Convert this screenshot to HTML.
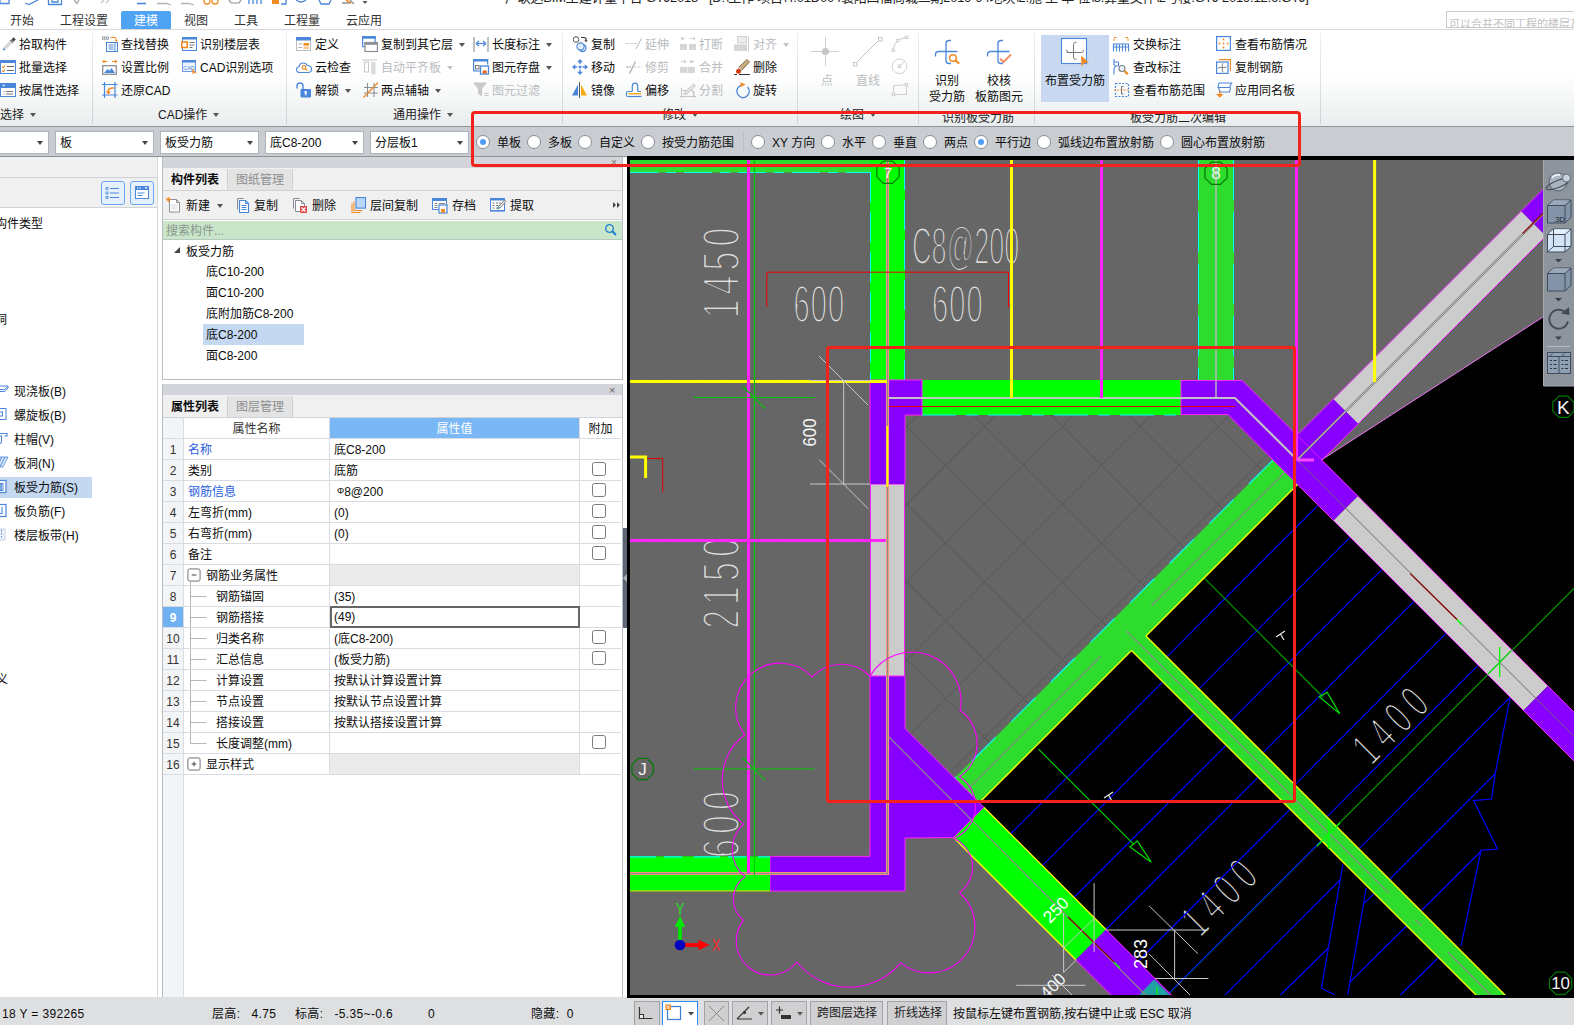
<!DOCTYPE html>
<html lang="zh">
<head>
<meta charset="utf-8">
<title>GTJ2018</title>
<style>
*{box-sizing:border-box;margin:0;padding:0}
html,body{width:1574px;height:1025px;overflow:hidden;background:#fff}
body{font-family:"Liberation Sans","Noto Sans CJK SC",sans-serif;font-size:12px;color:#0c0c0c;position:relative}
.abs{position:absolute}
.t{position:absolute;white-space:nowrap;line-height:16px;height:16px}
svg{position:absolute;overflow:visible}
#title{left:505px;top:-10px;font-size:13px;color:#222;letter-spacing:-0.21px}
.tab{position:absolute;top:12px;height:19px;line-height:18px;font-size:12px;color:#333;white-space:nowrap}
#tabsel{left:121px;top:11px;width:50px;height:19px;background:#4ea3f3;border-radius:2px 2px 0 0}
#ribbon{left:0;top:29px;width:1574px;height:97px;background:linear-gradient(#ffffff 0%,#ffffff 45%,#f4f6f6 75%,#e9eced 100%);border-top:1px solid #d9d9d9}
.sep{position:absolute;top:32px;width:1px;height:92px;background:linear-gradient(#f0f0f0,#cfd1d4)}
.ri{position:absolute;white-space:nowrap;font-size:12px;line-height:16px;height:16px;color:#0c0c0c}
.ri.dis{color:#b9bcc0}
.gl{position:absolute;white-space:nowrap;font-size:12px;line-height:16px;color:#222;top:107px}
.arr{display:inline-block;width:0;height:0;border-left:3px solid transparent;border-right:3px solid transparent;border-top:4px solid #555;vertical-align:middle;margin-left:6px;position:relative;top:-1px}
.dis .arr{border-top-color:#c0c3c7}
#optbar{left:0;top:126px;width:1574px;height:31px;background:#c9ccd1;border-top:1px solid #8f9398;border-bottom:1px solid #8f9398}
.dd{position:absolute;top:131px;height:23px;background:#fff;border:1px solid #aeb4bc;font-size:12px;line-height:22px;padding-left:4px;white-space:nowrap}
.dd:after{content:"";position:absolute;right:5px;top:9px;border-left:3px solid transparent;border-right:3px solid transparent;border-top:4px solid #444}
.rd{position:absolute;top:135px;width:14px;height:14px;border-radius:50%;background:#fff;border:1px solid #8a8f96}
.rd.on:after{content:"";position:absolute;left:3px;top:3px;width:6px;height:6px;border-radius:50%;background:#4f9af7}
.rt{position:absolute;top:135px;font-size:12px;line-height:16px;white-space:nowrap;color:#0c0c0c}


.sb{position:absolute;top:1001px;height:26px;background:#d0d0d2;border:1px solid #a3a3a5;font-size:12px;line-height:23px;white-space:nowrap;color:#1a1a1a}
.st{letter-spacing:0.35px}



/*PANELCSS*/
.lp{position:absolute;white-space:nowrap;font-size:12px;line-height:16px;height:16px;left:14px;color:#0c0c0c}
.pt{position:absolute;white-space:nowrap;font-size:12px;line-height:16px;height:16px;color:#0c0c0c}
.row{position:absolute;left:163px;width:458px;height:21px;border-bottom:1px solid #d9dde3}
.cell{position:absolute;top:0;height:20px;line-height:22px;font-size:12px;white-space:nowrap;border-right:1px solid #d9dde3;overflow:hidden}
.num{left:0;width:21px;text-align:center;background:#f3f4f6;color:#333}
.pn{left:21px;width:146px;padding-left:4px}
.pv{left:167px;width:250px;padding-left:4px;background:#fff}
.pa{left:417px;width:41px;border-right:none}
.cb{position:absolute;left:12px;top:2px;width:14px;height:14px;border:1px solid #7b7b7b;border-radius:2.500px;background:#fff}
.blue{color:#2b5fe0}
/*ENDPANELCSS*/
/*EXTRA_CSS*/
</style>
</head>
<body>
<div class="t" id="title">广联达BIM土建计量平台 GTJ2018 - [D:\工作 项目\4.01D004襄阳四福尚城二期2019-94地块\2.施 工 单 位\5.算量文件\2号楼.GTJ 2019.12.6.GTJ]</div>
<svg style="left:0;top:0" width="380" height="8" viewBox="0 0 380 8">
<path d="M0 0v3.500h9V0" fill="none" stroke="#4a86d9" stroke-width="1.300"/>
<path d="M25 3l4 1.500L38 0" fill="none" stroke="#4a86d9" stroke-width="1.300"/>
<path d="M48.500 0v4.500h13V0M52 0v2h6V0" fill="none" stroke="#4a86d9" stroke-width="1.300"/>
<path d="M74 0l3 3.500l2-3.500" fill="none" stroke="#9aa0a8" stroke-width="1.200"/>
<path d="M101 3l3-3M106 3l3-3" fill="none" stroke="#c0c4c9" stroke-width="1.200"/>
<path d="M137 3.500h9" stroke="#4a86d9" stroke-width="1.600"/>
<path d="M157 3.500h10l4 1.500M181 3.500h8l5 1.500" stroke="#b0b5bb" stroke-width="1.300" fill="none"/>
<circle cx="207" cy="1" r="3" fill="none" stroke="#f08a24" stroke-width="1.300"/><circle cx="215" cy="1" r="3" fill="none" stroke="#f08a24" stroke-width="1.300"/>
<path d="M229 0l2 3h8l2-3" fill="none" stroke="#8a9097" stroke-width="1.200"/>
<path d="M249 0v4M253 0v4M257 0v4M261 0v4" stroke="#4a86d9" stroke-width="1.300"/>
<rect x="272" y="-3" width="7" height="7" fill="#f08a24"/><path d="M281 4h5V0" stroke="#4a86d9" stroke-width="1.300" fill="none"/>
<path d="M296 0q5 4 10 0" stroke="#4a86d9" stroke-width="1.300" fill="none"/>
<path d="M319 0l2 4h8l2-4" stroke="#4a86d9" stroke-width="1.300" fill="none"/>
<path d="M342 3h8M350 0l4 4" stroke="#8a9097" stroke-width="1.300" fill="none"/><path d="M346 0l5 3" stroke="#f08a24" stroke-width="1.500"/>
<path d="M362.500 1h5l-2.500 3z" fill="#555"/>
</svg>
<div class="abs" id="tabsel"></div>
<div class="tab" style="left:10px">开始</div>
<div class="tab" style="left:60px">工程设置</div>
<div class="tab" style="left:134px;color:#fff">建模</div>
<div class="tab" style="left:184px">视图</div>
<div class="tab" style="left:234px">工具</div>
<div class="tab" style="left:284px">工程量</div>
<div class="tab" style="left:346px">云应用</div>
<div class="abs" style="left:1446px;top:11px;width:140px;height:17px;border:1px solid #c9c9c9;background:#fff;overflow:hidden"><div class="t" style="left:2px;top:4px;font-size:11px;color:#c2c2c2">可以合并不同工程的楼层及</div></div>
<div class="abs" id="ribbon"></div>
<div class="sep" style="left:92px"></div>
<div class="sep" style="left:286px"></div>
<div class="sep" style="left:562px"></div>
<div class="sep" style="left:797px"></div>
<div class="sep" style="left:918px"></div>
<div class="sep" style="left:1034px"></div>
<div class="sep" style="left:1320px"></div>
<svg style="left:1px;top:36px" width="16" height="16" viewBox="0 0 16 16"><path d="M12.6 1.2l2.2 2.2-2.3 2.3-2.2-2.2z" fill="#444"/><path d="M9.3 4.2l2.6 2.6" stroke="#555" stroke-width="1.6"/><path d="M9.6 5l1.5 1.5L4.3 13.3 2.2 14l.6-2.2z" fill="#e9e9e9" stroke="#999" stroke-width=".7"/><path d="M2 14.2l.7-2.3 1.6 1.5z" fill="#4a86d9"/></svg>
<div class="ri" style="left:19px;top:37px">拾取构件</div>
<svg style="left:0px;top:60px" width="16" height="16" viewBox="0 0 16 16"><rect x=".5" y=".5" width="15" height="13" fill="#fff" stroke="#4a86d9"/><rect x="0" y="0" width="16" height="3" fill="#4a86d9"/><path d="M2 6.5l1.2 1.2L5.2 5.5M2 10.500l1.200 1.200L5.200 9.500" fill="none" stroke="#f08a24" stroke-width="1.1"/><path d="M7 6.5h7M7 10.500h7" stroke="#666" stroke-width="1"/></svg>
<div class="ri" style="left:19px;top:60px">批量选择</div>
<svg style="left:0px;top:83px" width="16" height="16" viewBox="0 0 16 16"><rect x=".5" y=".5" width="15" height="13" fill="#fff" stroke="#4a86d9"/><rect x="0" y="0" width="16" height="5" fill="#4a86d9"/><path d="M2.200 1.800h3l-1.500 1.800z" fill="#fff"/><path d="M6 8.500h7M6 11h7" stroke="#777" stroke-width="1"/><path d="M3.500 8.500h1M3.500 11h1" stroke="#777" stroke-width="1"/></svg>
<div class="ri" style="left:19px;top:83px">按属性选择</div>
<svg style="left:102px;top:36px" width="16" height="16" viewBox="0 0 16 16"><rect x="0.500" y="1" width="6" height="2.200" fill="#fff" stroke="#8a9097" stroke-width=".8"/><path d="M2.500 1v2.200M4.500 1v2.200" stroke="#8a9097" stroke-width=".7"/><path d="M8.500 1.500h3.500q2 0 2 2v1" fill="none" stroke="#f08a24" stroke-width="1.100"/><path d="M12.700 4l1.800 2 1.500-2z" fill="#f08a24"/><rect x="4.500" y="6.500" width="11" height="9" fill="#fff" stroke="#4a86d9"/><path d="M6.500 9h5M6.500 11h5M6.500 13h5" stroke="#4a86d9" stroke-width="1"/><path d="M13 7v8" stroke="#4a86d9" stroke-width="1"/></svg>
<div class="ri" style="left:121px;top:37px">查找替换</div>
<svg style="left:102px;top:59px" width="16" height="16" viewBox="0 0 16 16"><path d="M1 2.500h4.500M10 2.500h4.500" stroke="#f08a24" stroke-width="1.100"/><path d="M0 2.500l2.500-2v4zM15.500 2.500l-2.500-2v4z" fill="#f08a24"/><rect x=".7" y="6.700" width="13.600" height="8.600" fill="#fff" stroke="#8a9097" stroke-width="1.300"/><path d="M2 14l3.500-4 2 1.800 2-2.800 3.500 5z" fill="#4a86d9"/></svg>
<div class="ri" style="left:121px;top:60px">设置比例</div>
<svg style="left:102px;top:82px" width="16" height="16" viewBox="0 0 16 16"><path d="M2.500 0v16M13 0v16M0 2.500h15.500M0 13h15.500" stroke="#4a86d9" stroke-width="1.200"/><path d="M6 10q0-4.500 6-4" fill="none" stroke="#f08a24" stroke-width="1.600"/><path d="M3.800 9.500h5l-2.500 3.200z" fill="#f08a24"/></svg>
<div class="ri" style="left:121px;top:83px">还原CAD</div>
<svg style="left:181px;top:37px" width="16" height="16" viewBox="0 0 16 16"><rect x="1.500" y=".5" width="14" height="13" fill="#fff" stroke="#4a86d9"/><rect x="1" y="0" width="15" height="2.500" fill="#4a86d9"/><rect x="0.800" y="5" width="5.500" height="5.500" fill="#fff" stroke="#f08a24" stroke-width="1.600"/><path d="M8.500 5.500h5M8.500 8h5M8.500 10.500h3" stroke="#777" stroke-width="1"/></svg>
<div class="ri" style="left:200px;top:37px">识别楼层表</div>
<svg style="left:182px;top:60px" width="16" height="16" viewBox="0 0 16 16"><rect x=".5" y=".5" width="13" height="11" fill="#eef3fb" stroke="#4a86d9" stroke-width=".8"/><rect x="0" y="0" width="14" height="2.500" fill="#4a86d9"/><text x="1.200" y="9.500" font-size="5.500" fill="#4a86d9" font-family="Liberation Sans,sans-serif">CAD</text><path d="M10.500 8.500v6l1.700-1.700 2.800 1z" fill="#f08a24"/></svg>
<div class="ri" style="left:200px;top:60px">CAD识别选项</div>
<svg style="left:296px;top:37px" width="16" height="16" viewBox="0 0 16 16"><rect x=".5" y=".5" width="14" height="13" fill="#fff" stroke="#b9bdc2"/><rect x="0" y="0" width="15" height="3.500" fill="#4a86d9"/><rect x="7.500" y="6" width="5.500" height="2.500" fill="#f08a24"/><rect x="7.500" y="9.500" width="5.500" height="2.500" fill="#f7c58b"/><path d="M2.500 7h3.500M2.500 10.500h3.500" stroke="#aaa" stroke-width="1"/></svg>
<div class="ri" style="left:315px;top:37px">定义</div>
<svg style="left:296px;top:59px" width="16" height="16" viewBox="0 0 16 16"><path d="M4 13.500q-3.500 0-3.500-3 0-2.500 2.800-3 .3-3.500 4-3.500 3 0 3.800 2.500 4.400 0 4.400 3.500 0 3.500-3.500 3.500z" fill="#fff" stroke="#4a86d9" stroke-width="1.100"/><circle cx="8" cy="8.500" r="1.900" fill="none" stroke="#f08a24" stroke-width="1.100"/><path d="M9.400 9.900l1.600 1.600" stroke="#f08a24" stroke-width="1.200"/></svg>
<div class="ri" style="left:315px;top:60px">云检查</div>
<svg style="left:296px;top:82px" width="16" height="16" viewBox="0 0 16 16"><path d="M1 6.500v-2.500q0-3 3-3t3 3v3" fill="none" stroke="#4a86d9" stroke-width="1.400"/><rect x="4.500" y="7" width="10.500" height="8.500" rx="1" fill="#4a86d9"/><circle cx="9.700" cy="10.300" r="1.300" fill="#fff"/><rect x="9.100" y="10.500" width="1.200" height="3" fill="#fff"/></svg>
<div class="ri" style="left:315px;top:83px">解锁<i class="arr"></i></div>
<svg style="left:362px;top:36px" width="16" height="16" viewBox="0 0 16 16"><rect x=".6" y=".6" width="12.500" height="10" fill="#fff" stroke="#4a86d9" stroke-width="1.200"/><rect x="0" y="0" width="13.700" height="2.700" fill="#4a86d9"/><rect x="3" y="6.500" width="12.400" height="9" fill="#fff" stroke="#8a9097" stroke-width="1.200"/><rect x="2.400" y="6" width="13.600" height="2.800" fill="#8a9097"/></svg>
<div class="ri" style="left:381px;top:37px">复制到其它层<i class="arr"></i></div>
<svg style="left:362px;top:59px" width="16" height="16" viewBox="0 0 16 16"><path d="M0 1h15" stroke="#c4c7cb" stroke-width="1"/><rect x="2.500" y="3" width="4" height="10" fill="#fff" stroke="#c4c7cb"/><rect x="9" y="3" width="4.500" height="12.500" fill="#dcdcdc"/></svg>
<div class="ri dis" style="left:381px;top:60px">自动平齐板<i class="arr"></i></div>
<svg style="left:363px;top:82px" width="16" height="16" viewBox="0 0 16 16"><path d="M4.500 1v14M11 1v14M1 5.500h14M1 11h14" stroke="#8a9097" stroke-width="1.100"/><path d="M0.500 15.500L15 0.500" stroke="#f08a24" stroke-width="1.200"/></svg>
<div class="ri" style="left:381px;top:83px">两点辅轴<i class="arr"></i></div>
<svg style="left:473px;top:37px" width="16" height="16" viewBox="0 0 16 16"><path d="M1 0v15M15 0v15" stroke="#8a9097" stroke-width="1.100"/><path d="M4 6.500h8" stroke="#4a86d9" stroke-width="1.200"/><path d="M3 6.500l3-2.500M3 6.500l3 2.500M13 6.500l-3-2.500M13 6.500l-3 2.500" stroke="#4a86d9" stroke-width="1.200" fill="none"/></svg>
<div class="ri" style="left:492px;top:37px">长度标注<i class="arr"></i></div>
<svg style="left:473px;top:59px" width="16" height="16" viewBox="0 0 16 16"><path d="M.6 12V.6h14v5" fill="none" stroke="#4a86d9" stroke-width="1.200"/><rect x="0" y="0" width="15.200" height="2.500" fill="#4a86d9"/><rect x="2.500" y="6.500" width="3.500" height="3.500" fill="none" stroke="#777" stroke-width="1"/><path d="M.6 12h6" stroke="#4a86d9" stroke-width="1.200"/><rect x="7.500" y="7" width="8" height="8" fill="#fff" stroke="#4a86d9" stroke-width="1.300"/><rect x="9.700" y="11.500" width="4" height="3" fill="#e8641b"/></svg>
<div class="ri" style="left:492px;top:60px">图元存盘<i class="arr"></i></div>
<svg style="left:473px;top:82px" width="16" height="16" viewBox="0 0 16 16"><path d="M0 .5h14l-5 6.500v7.500l-4-3v-4.500z" fill="#c9c9c9"/><path d="M11.500 11.500h4M11.500 13.500h4" stroke="#c9c9c9" stroke-width="1"/></svg>
<div class="ri dis" style="left:492px;top:83px">图元过滤</div>
<svg style="left:572px;top:36px" width="16" height="16" viewBox="0 0 16 16"><circle cx="4" cy="3.500" r="2.800" fill="#fff" stroke="#555" stroke-width="1"/><path d="M9 1.500h3q2 0 2 1.800v1.500" fill="none" stroke="#333" stroke-width="1.200"/><path d="M12.300 4.300l1.700 2 1.700-2z" fill="#333"/><circle cx="10.500" cy="12" r="3.600" fill="#cfe0f7" stroke="#4a86d9" stroke-width="1.100"/><circle cx="8.500" cy="10.500" r="3.600" fill="#e3edfb" stroke="#4a86d9" stroke-width="1.100"/></svg>
<div class="ri" style="left:591px;top:37px">复制</div>
<svg style="left:572px;top:59px" width="16" height="16" viewBox="0 0 16 16"><path d="M8 2v12M2 8h12" stroke="#4a86d9" stroke-width="1.400" stroke-dasharray="3 1.500 3 1 3 1.500"/><path d="M8 0l2.800 3.200h-5.600zM8 16l2.800-3.200h-5.600zM0 8l3.200-2.800v5.600zM16 8l-3.200-2.800v5.600z" fill="#4a86d9"/></svg>
<div class="ri" style="left:591px;top:60px">移动</div>
<svg style="left:572px;top:82px" width="16" height="16" viewBox="0 0 16 16"><path d="M7.500 0v16" stroke="#555" stroke-width="1"/><path d="M6 2.500v11h-6z" fill="#4a86d9"/><path d="M9 2.500v11h6z" fill="#f9a913"/></svg>
<div class="ri" style="left:591px;top:83px">镜像</div>
<svg style="left:626px;top:37px" width="16" height="16" viewBox="0 0 16 16"><path d="M0 6.500h7" stroke="#c4c7cb" stroke-width="1" stroke-dasharray="3 1.500"/><path d="M10 12L15.500 1.500" stroke="#c4c7cb" stroke-width="1.200"/><path d="M8 6.500h3" stroke="#c4c7cb" stroke-width="1"/></svg>
<div class="ri dis" style="left:645px;top:37px">延伸</div>
<svg style="left:626px;top:60px" width="16" height="16" viewBox="0 0 16 16"><path d="M0 7h5" stroke="#aaa" stroke-width="1"/><path d="M3.500 13.500L9.500 1.500" stroke="#aaa" stroke-width="1.200"/><path d="M8.500 7h7.500" stroke="#c4c7cb" stroke-width="1" stroke-dasharray="2 1.300"/></svg>
<div class="ri dis" style="left:645px;top:60px">修剪</div>
<svg style="left:626px;top:82px" width="16" height="16" viewBox="0 0 16 16"><path d="M1.800 14.500q-1.300 0-1.300-1.500v-2q0-1.500 1.500-1.500h3.500q.8 0 .8-.8v-4q0-3.500 2.700-3.500t2.700 3.500v4q0 .8.800.8h2.500" fill="#fff" stroke="#4a86d9" stroke-width="1.200"/><path d="M2 14.500h13.500" stroke="#4a86d9" stroke-width="1.200"/><path d="M2.500 11.700h13" stroke="#f9a913" stroke-width="1.400"/><path d="M8.200 4v6" stroke="#f9a913" stroke-width="0"/></svg>
<div class="ri" style="left:645px;top:83px">偏移</div>
<svg style="left:680px;top:36px" width="16" height="16" viewBox="0 0 16 16"><path d="M2.500 2.500h3M10 2.500h3" stroke="#c4c7cb" stroke-width="1" stroke-dasharray="2 1"/><path d="M.5 2.500l2.500-2v4zM15.500 2.500l-2.500-2v4z" fill="#c4c7cb"/><rect x="0" y="8" width="7" height="6" fill="#d6d6d6"/><rect x="9" y="8" width="7" height="6" fill="#d6d6d6"/></svg>
<div class="ri dis" style="left:699px;top:37px">打断</div>
<svg style="left:680px;top:59px" width="16" height="16" viewBox="0 0 16 16"><path d="M1 2.500h3M12 2.500h3" stroke="#c4c7cb" stroke-width="1" stroke-dasharray="2 1"/><path d="M6.500 2.500l-2.500-2v4zM9.500 2.500l2.500-2v4z" fill="#c4c7cb"/><rect x="0" y="8" width="7.300" height="6" fill="#d6d6d6"/><rect x="7.700" y="8" width="7.300" height="6" fill="#d6d6d6"/></svg>
<div class="ri dis" style="left:699px;top:60px">合并</div>
<svg style="left:680px;top:83px" width="16" height="16" viewBox="0 0 16 16"><path d="M1.500 7.500h11l1.500 6h-12.500z" fill="none" stroke="#c4c4c4" stroke-width="1"/><path d="M1.500 5v10M14 8v7M0 13.500h16" stroke="#c4c4c4" stroke-width="1"/><path d="M4 11.500l1-2.500L13.500 1l2 2-8.500 8z" fill="#e4e4e4" stroke="#bdbdbd" stroke-width=".8"/></svg>
<div class="ri dis" style="left:699px;top:83px">分割</div>
<svg style="left:734px;top:36px" width="16" height="16" viewBox="0 0 16 16"><rect x="3.500" y=".5" width="9" height="6.500" fill="#ececec" stroke="#d0d0d0"/><rect x="0" y="8.500" width="13" height="6.500" fill="#d6d6d6"/><path d="M14.500 0v16" stroke="#d0d0d0" stroke-width="1"/></svg>
<div class="ri dis" style="left:753px;top:37px">对齐<i class="arr"></i></div>
<svg style="left:734px;top:59px" width="16" height="16" viewBox="0 0 16 16"><path d="M0 15.500h3M5 15.500h11" stroke="#333" stroke-width="1"/><path d="M13 .5l2.500 2.500L8 11 5 8z" fill="#c9ab7c" stroke="#6f5532" stroke-width=".8"/><path d="M5.200 7.800l3 3-1 1.200-3-3z" fill="#eee" stroke="#888" stroke-width=".6"/><circle cx="4.500" cy="12.300" r="2.500" fill="#d3400f"/></svg>
<div class="ri" style="left:753px;top:60px">删除</div>
<svg style="left:735px;top:82px" width="16" height="16" viewBox="0 0 16 16"><path d="M6.500 3.300A6.200 6.200 0 1 0 12.500 5" fill="none" stroke="#4a86d9" stroke-width="1.300"/><path d="M5.500 .3l5 2.200-5 2.700z" fill="#f08a24"/></svg>
<div class="ri" style="left:753px;top:83px">旋转</div>
<div class="gl" style="left:0px">选择<i class="arr"></i></div>
<div class="gl" style="left:158px">CAD操作<i class="arr"></i></div>
<div class="gl" style="left:393px">通用操作<i class="arr"></i></div>
<div class="gl" style="left:662px">修改<i class="arr"></i></div>
<div class="gl" style="left:840px">绘图<i class="arr"></i></div>
<div class="gl" style="left:942px;top:110px">识别板受力筋</div>
<div class="gl" style="left:1130px;top:110px">板受力筋二次编辑</div>
<svg style="left:806px;top:34px" width="110" height="66" viewBox="806 34 110 66">
<path d="M811 51.500h28M825.500 37v29" stroke="#cfcfcf" stroke-width="1"/><circle cx="825.500" cy="51.500" r="3.600" fill="#c6c6c6"/>
<path d="M856 63L879 40" stroke="#c6c6c6" stroke-width="1"/><rect x="853.500" y="62.500" width="3.500" height="3.500" fill="#fff" stroke="#c6c6c6"/><rect x="878.500" y="37.500" width="3.500" height="3.500" fill="#fff" stroke="#c6c6c6"/>
<path d="M893.500 49q.5-9 12-11.500" fill="none" stroke="#c9c9c9" stroke-width="1"/><rect x="892" y="49" width="2.600" height="2.600" fill="#fff" stroke="#c6c6c6" stroke-width=".8"/><rect x="896.300" y="39.300" width="2.600" height="2.600" fill="#fff" stroke="#c6c6c6" stroke-width=".8"/><rect x="905.300" y="36" width="2.600" height="2.600" fill="#fff" stroke="#c6c6c6" stroke-width=".8"/>
<circle cx="899.500" cy="66.300" r="7.300" fill="none" stroke="#d0d0d0" stroke-width="1"/><path d="M899.500 66.300l5-5" stroke="#d0d0d0"/><rect x="898.200" y="65" width="2.600" height="2.600" fill="#fff" stroke="#c6c6c6" stroke-width=".8"/>
<path d="M893.500 94.500v-9l13-.8v9.800z" fill="none" stroke="#cfcfcf" stroke-width="1"/><rect x="892.200" y="93.200" width="2.600" height="2.600" fill="#fff" stroke="#c6c6c6" stroke-width=".8"/><rect x="905.200" y="83.400" width="2.600" height="2.600" fill="#fff" stroke="#c6c6c6" stroke-width=".8"/>
</svg>
<div class="ri dis" style="left:821px;top:73px">点</div>
<div class="ri dis" style="left:856px;top:73px">直线</div>
<svg style="left:930px;top:36px" width="100" height="32" viewBox="930 36 100 32">
<path d="M951 40.500h-2q-3 0-3 3v17q0 3 3 3h2M957.500 51.500h-19q-3 0-3 3v2" fill="none" stroke="#4a86d9" stroke-width="1.300"/>
<circle cx="953" cy="58" r="3.300" fill="#fff" stroke="#f08a24" stroke-width="1.500"/><path d="M955.500 60.500l3 2.500" stroke="#f08a24" stroke-width="2.200" stroke-linecap="round"/>
<path d="M1003 40.500h-2q-3 0-3 3v17q0 3 3 3h2M1009.500 51.500h-19q-3 0-3 3v2" fill="none" stroke="#4a86d9" stroke-width="1.300"/>
<path d="M1000 58.500l3.500 3.500 7.500-7.500" fill="none" stroke="#f4906a" stroke-width="2"/>
</svg>
<div class="ri" style="left:907px;width:80px;text-align:center;top:73px">识别</div>
<div class="ri" style="left:907px;width:80px;text-align:center;top:89px">受力筋</div>
<div class="ri" style="left:959px;width:80px;text-align:center;top:73px">校核</div>
<div class="ri" style="left:959px;width:80px;text-align:center;top:89px">板筋图元</div>
<div class="abs" style="left:1041px;top:35px;width:68px;height:67px;background:#c7d8f0"></div>
<svg style="left:1060px;top:37px" width="30" height="30" viewBox="1060 37 30 30">
<rect x="1061.500" y="38.500" width="25" height="25" fill="#fff" stroke="#4a86d9" stroke-width="1.100"/>
<path d="M1073.500 44.500v12.500q0 2.300 2.300 2.300h.7M1073.500 44.500q0-2.300 2.300-2.300h.7M1066.700 52.500h14.500q2.300 0 2.300-2v-.7M1073.500 52.500h-4.500q-2.300 0-2.300-2.300v-.7" fill="none" stroke="#777" stroke-width="1"/>
<path d="M1081 55.500l8 7-4.500.6-3 3.400z" fill="#f08a24"/>
</svg>
<div class="ri" style="left:1045px;width:60px;text-align:center;top:73px">布置受力筋</div>
<svg style="left:1113px;top:36px" width="16" height="16" viewBox="0 0 16 16"><path d="M1 5v-3.500h3M15 5v-3.500h-3" fill="none" stroke="#f08a24" stroke-width="1.100" stroke-dasharray="2.500 1"/><path d="M.5 15.500v-7.500h15v7.500" fill="none" stroke="#4a86d9" stroke-width="1.100"/><path d="M3.500 8v7.500M6.500 8v7.500M9.500 8v7.500M12.500 8v7.500M.5 11h15" stroke="#4a86d9" stroke-width="1"/></svg>
<div class="ri" style="left:1133px;top:37px">交换标注</div>
<svg style="left:1113px;top:59px" width="16" height="16" viewBox="0 0 16 16"><path d="M1 0v5.500l1.500 2-1.500 2v6" fill="none" stroke="#4a86d9" stroke-width="1.100"/><path d="M1 3h4.500v4h-3" fill="none" stroke="#4a86d9" stroke-width="1"/><circle cx="9" cy="9.500" r="3" fill="#eef4fc" stroke="#7a8088" stroke-width="1.100"/><path d="M11.500 12l3.300 3.300" stroke="#f08a24" stroke-width="2.200"/></svg>
<div class="ri" style="left:1133px;top:60px">查改标注</div>
<svg style="left:1114px;top:82px" width="16" height="16" viewBox="0 0 16 16"><rect x="1.500" y="1.500" width="13" height="13" fill="none" stroke="#4a86d9" stroke-width="1.100" stroke-dasharray="2 1.400"/><path d="M0 8h16" stroke="#f08a24" stroke-width="1" stroke-dasharray="2 1.200"/><path d="M9.500 4.500h-2v7.500h2" fill="none" stroke="#777" stroke-width="1"/></svg>
<div class="ri" style="left:1133px;top:83px">查看布筋范围</div>
<svg style="left:1216px;top:36px" width="16" height="16" viewBox="0 0 16 16"><rect x=".6" y=".6" width="13.800" height="13.800" fill="#fff" stroke="#4a86d9" stroke-width="1.200"/><path d="M7.500 2l1.300 2.200h-2.600zM7.500 13l1.300-2.200h-2.600zM2 7.500l2.200-1.300v2.600zM13 7.500l-2.200-1.300v2.600z" fill="#f08a24"/><circle cx="7.500" cy="7.500" r=".9" fill="#f08a24"/></svg>
<div class="ri" style="left:1235px;top:37px">查看布筋情况</div>
<svg style="left:1216px;top:59px" width="16" height="16" viewBox="0 0 16 16"><path d="M3 .6h11.400v11.400" fill="none" stroke="#f08a24" stroke-width="1.100"/><rect x=".6" y="3" width="11.400" height="11.400" fill="#fff" stroke="#4a86d9" stroke-width="1.200"/><path d="M6.300 5.500v6.500M3 8.500h6.500M6.300 5.500q0-1 1-1M3 8.500q-.8 0-.8 1M9.500 8.500q.8 0 .8-1M6.300 12q0 .8 1 .8" fill="none" stroke="#777" stroke-width=".9"/></svg>
<div class="ri" style="left:1235px;top:60px">复制钢筋</div>
<svg style="left:1216px;top:82px" width="16" height="16" viewBox="0 0 16 16"><path d="M3 1h12.500l-2 4.500h-11.500zM2.500 5.500l1.500 4.500h9.500l1-4.500" fill="#fff" stroke="#4a86d9" stroke-width="1.100"/><path d="M0 12h7.500l-3.700 3.700z" fill="#f08a24"/><path d="M3.800 9v3" stroke="#f08a24" stroke-width="1.300"/></svg>
<div class="ri" style="left:1235px;top:83px">应用同名板</div>
<div class="abs" id="optbar"></div>
<div class="dd" style="left:-40px;width:89px"></div>
<div class="dd" style="left:55px;width:99px">板</div>
<div class="dd" style="left:160px;width:99px">板受力筋</div>
<div class="dd" style="left:265px;width:99px">底C8-200</div>
<div class="dd" style="left:370px;width:99px">分层板1</div>
<div class="rd on" style="left:476px"></div><div class="rt" style="left:497px">单板</div>
<div class="rd" style="left:527px"></div><div class="rt" style="left:548px">多板</div>
<div class="rd" style="left:578px"></div><div class="rt" style="left:599px">自定义</div>
<div class="rd" style="left:641px"></div><div class="rt" style="left:662px">按受力筋范围</div>
<div class="rd" style="left:751px"></div><div class="rt" style="left:772px">XY 方向</div>
<div class="rd" style="left:821px"></div><div class="rt" style="left:842px">水平</div>
<div class="rd" style="left:872px"></div><div class="rt" style="left:893px">垂直</div>
<div class="rd" style="left:923px"></div><div class="rt" style="left:944px">两点</div>
<div class="rd on" style="left:974px"></div><div class="rt" style="left:995px">平行边</div>
<div class="rd" style="left:1037px"></div><div class="rt" style="left:1058px">弧线边布置放射筋</div>
<div class="rd" style="left:1160px"></div><div class="rt" style="left:1181px">圆心布置放射筋</div>
<div class="abs" style="left:743px;top:132px;width:1px;height:20px;background:#bcc0c6"></div>
<div class="abs" style="left:0;top:157px;width:157px;height:840px;background:#fff"></div>
<div class="abs" style="left:0;top:157px;width:157px;height:51px;background:#f0f0f0;border-bottom:1px solid #cfd3d8"></div>
<div class="abs" style="left:0;top:177px;width:157px;height:1px;background:#cfd3d8"></div>
<div class="abs" style="left:157px;top:157px;width:1px;height:840px;background:#d6d9dd"></div>
<div class="abs" style="left:101px;top:181px;width:24px;height:24px;border:1px solid #69a7ee;border-radius:3px;background:#e6f0fc"></div>
<div class="abs" style="left:130px;top:181px;width:24px;height:24px;border:1px solid #69a7ee;border-radius:3px;background:#e6f0fc"></div>
<svg style="left:101px;top:181px" width="24" height="24" viewBox="0 0 24 24"><path d="M9 7.500h9M9 12h9M9 16.500h9" stroke="#4a86d9" stroke-width="1"/><rect x="5" y="6.500" width="2" height="2" fill="none" stroke="#4a86d9" stroke-width=".8"/><rect x="5" y="11" width="2" height="2" fill="none" stroke="#4a86d9" stroke-width=".8"/><rect x="5" y="15.500" width="2" height="2" fill="none" stroke="#4a86d9" stroke-width=".8"/></svg>
<svg style="left:130px;top:181px" width="24" height="24" viewBox="0 0 24 24"><rect x="5.500" y="5.500" width="13" height="12" fill="#fff" stroke="#4a86d9"/><rect x="5" y="5" width="14" height="4" fill="#4a86d9"/><path d="M7 7h4" stroke="#fff" stroke-width="1" stroke-dasharray="1 .6"/><path d="M14.500 6.300h3l-1.500 1.700z" fill="#fff"/><path d="M7.500 12h7M7.500 14.500h5" stroke="#4a86d9" stroke-width="1"/></svg>
<div class="lp" style="left:-5px;top:216px">构件类型</div>
<div class="lp" style="left:-5px;top:312px">洞</div>
<div class="lp" style="left:-4px;top:672px">义</div>
<div class="abs" style="left:0;top:477px;width:92px;height:21px;background:#c5d8f2"></div>
<svg style="left:0;top:383px" width="12" height="16" viewBox="0 0 12 16"><path d="M-4 6.500l3-3.500h9l-3 3.500zM-4 6.500v2h9l3-3.500v-2" fill="#fff" stroke="#4a86d9" stroke-width="1"/></svg>
<div class="lp" style="top:384px">现浇板(B)</div>
<svg style="left:0;top:407px" width="12" height="16" viewBox="0 0 12 16"><rect x="-5" y="1.500" width="11" height="11" fill="#fff" stroke="#4a86d9"/><rect x="-1.500" y="5" width="4" height="4" fill="none" stroke="#4a86d9"/></svg>
<div class="lp" style="top:408px">螺旋板(B)</div>
<svg style="left:0;top:431px" width="12" height="16" viewBox="0 0 12 16"><path d="M-3 2.500h10v2.500h-2.500M-3 5h4.500v5q0 3-3 3h-2" fill="none" stroke="#4a86d9" stroke-width="1.100"/></svg>
<div class="lp" style="top:432px">柱帽(V)</div>
<svg style="left:0;top:455px" width="12" height="16" viewBox="0 0 12 16"><path d="M-6 12l5-10h9l-5 10z" fill="#dfe9f8" stroke="#4a86d9" stroke-width=".8"/><path d="M-3 12l5-10M0 12l5-10M-5.500 12l5-10" stroke="#4a86d9" stroke-width="1"/></svg>
<div class="lp" style="top:456px">板洞(N)</div>
<svg style="left:0;top:479px" width="12" height="16" viewBox="0 0 12 16"><rect x="-6" y="1.500" width="12" height="12" fill="#fff" stroke="#4a86d9" stroke-width="1.200"/><rect x="-3" y="4.500" width="6" height="7" fill="none" stroke="#4a86d9"/><path d="M1 4.500v7" stroke="#4a86d9" stroke-width="1.500"/></svg>
<div class="lp" style="top:480px">板受力筋(S)</div>
<svg style="left:0;top:503px" width="12" height="16" viewBox="0 0 12 16"><rect x="-6" y="1.500" width="12" height="12" fill="#fff" stroke="#4a86d9" stroke-width="1.200"/><path d="M-2 5v5.500h4M2 4v7" fill="none" stroke="#4a86d9" stroke-width="1.100"/></svg>
<div class="lp" style="top:504px">板负筋(F)</div>
<svg style="left:0;top:527px" width="12" height="16" viewBox="0 0 12 16"><rect x="-4" y="2" width="9" height="11" fill="#eef3fb" stroke="#b9c6da" stroke-width=".8"/><path d="M1.500 3v9" stroke="#4a86d9" stroke-width="1" stroke-dasharray="1.500 1.500"/></svg>
<div class="lp" style="top:528px">楼层板带(H)</div>
<div class="abs" style="left:162px;top:157px;width:461px;height:223px;background:#fff;border:1px solid #b9bdc4"></div>
<div class="abs" style="left:163px;top:157px;width:459px;height:11px;background:#d3d5da"></div>
<div class="abs" style="left:163px;top:168px;width:459px;height:23px;background:#f0f0f0;border-bottom:1px solid #cfd3d8"></div>
<div class="abs" style="left:227px;top:169px;width:66px;height:21px;background:#e3e3e3;border-left:1px solid #d0d0d0;border-right:1px solid #d0d0d0"></div>
<div class="pt" style="left:171px;top:172px;font-weight:bold">构件列表</div>
<div class="pt" style="left:236px;top:172px;color:#8e8e8e">图纸管理</div>
<div class="pt" style="left:611px;top:155px;color:#777;font-size:10px">×</div>
<div class="abs" style="left:163px;top:191px;width:459px;height:29px;background:#f0f0f0;border-bottom:1px solid #cfd3d8"></div>
<svg style="left:166px;top:197px" width="16" height="16" viewBox="0 0 16 16"><path d="M3.500 2.500h7l3 3v9.500h-10z" fill="#fff" stroke="#8a8f96"/><path d="M10.500 2.500v3h3" fill="none" stroke="#8a8f96"/><path d="M5 8h6.500M5 10h6.500M5 12h6.500" stroke="#d0d0d0" stroke-width=".8"/><path d="M0 2.500h5M2.500 0v5M.7.700l3.600 3.600M4.300.7L.7 4.300" stroke="#f08a24" stroke-width=".9"/></svg>
<div class="pt" style="left:186px;top:198px">新建</div>
<svg style="left:235px;top:197px" width="16" height="16" viewBox="0 0 16 16"><path d="M2.500 12.500v-11h6" fill="none" stroke="#8a8f96"/><path d="M4.500 3.500h6l3 3v9h-9z" fill="#fff" stroke="#4a86d9" stroke-width="1.100"/><path d="M10.500 3.500v3h3" fill="none" stroke="#4a86d9"/><path d="M6.500 8.500h5M6.500 10.500h5M6.500 12.500h5" stroke="#4a86d9" stroke-width="1"/></svg>
<div class="pt" style="left:254px;top:198px">复制</div>
<svg style="left:292px;top:197px" width="16" height="16" viewBox="0 0 16 16"><path d="M1.500 11.500v-10h6" fill="none" stroke="#8a8f96"/><path d="M3.500 3.500h6l3 3v8h-9z" fill="#fff" stroke="#8a8f96"/><path d="M9.500 3.500v3h3" fill="none" stroke="#8a8f96"/><rect x="8" y="9" width="7" height="7" fill="#e34a4a"/><path d="M9.500 10.500l4 4M13.500 10.500l-4 4" stroke="#fff" stroke-width="1.100"/></svg>
<div class="pt" style="left:312px;top:198px">删除</div>
<svg style="left:351px;top:197px" width="16" height="16" viewBox="0 0 16 16"><path d="M1 6.500v9h8.500M3 4.500v9h8.500" fill="none" stroke="#f08a24" stroke-width="1.100"/><rect x="5" y=".6" width="9.500" height="10.500" fill="#bcd6f7" stroke="#4a86d9" stroke-width="1.100"/></svg>
<div class="pt" style="left:370px;top:198px">层间复制</div>
<svg style="left:432px;top:197px" width="16" height="16" viewBox="0 0 16 16"><rect x=".5" y="1.500" width="14" height="11" fill="#fff" stroke="#4a86d9"/><rect x="0" y="1" width="15" height="3" fill="#4a86d9"/><path d="M2.500 6.500h3M2.500 8.500h3M2.500 10.500h3M7 6.500h6" stroke="#888" stroke-width="1"/><rect x="7" y="8" width="8" height="8" fill="#fff" stroke="#4a86d9" stroke-width="1.200"/><rect x="9" y="12" width="4" height="3.500" fill="#f08a24"/></svg>
<div class="pt" style="left:452px;top:198px">存档</div>
<svg style="left:490px;top:197px" width="16" height="16" viewBox="0 0 16 16"><rect x=".5" y="1.500" width="14" height="12" fill="#fff" stroke="#4a86d9"/><rect x="0" y="1" width="15" height="2.500" fill="#4a86d9"/><path d="M2.500 6h2M2.500 8.500h2M2.500 11h2M6 6h5M6 8.500h4M6 11h2" stroke="#777" stroke-width="1" stroke-dasharray="2 .8"/><path d="M14.500 3l1.500 1.500-6 6.500-2.500 1 1-2.500z" fill="#ddd" stroke="#666" stroke-width=".7"/><path d="M7.500 12l1-2.500 1.500 1.500z" fill="#29a3e0"/><path d="M0 14h15" stroke="#4a86d9" stroke-width="1.200"/></svg>
<div class="pt" style="left:510px;top:198px">提取</div>
<div class="abs" style="left:217px;top:204px;width:0;height:0;border-left:3px solid transparent;border-right:3px solid transparent;border-top:4px solid #555"></div>
<div class="abs" style="left:613px;top:202px;width:0;height:0;border-top:3px solid transparent;border-bottom:3px solid transparent;border-left:3.500px solid #444"></div>
<div class="abs" style="left:617px;top:202px;width:0;height:0;border-top:3px solid transparent;border-bottom:3px solid transparent;border-left:3.500px solid #444"></div>
<div class="abs" style="left:163px;top:221px;width:459px;height:19px;background:#c9e6ca;border-bottom:1px solid #b8c8c0"></div>
<div class="pt" style="left:166px;top:223px;color:#8a968c">搜索构件...</div>
<svg style="left:604px;top:223px" width="14" height="14" viewBox="0 0 14 14"><circle cx="5.500" cy="5.500" r="3.800" fill="none" stroke="#1d7fd1" stroke-width="1.300"/><path d="M8.300 8.300l3.700 3.700" stroke="#1d7fd1" stroke-width="2"/></svg>
<div class="abs" style="left:174px;top:247px;width:0;height:0;border-left:6px solid transparent;border-bottom:6px solid #444"></div>
<div class="pt" style="left:186px;top:244px">板受力筋</div>
<div class="abs" style="left:203px;top:324px;width:101px;height:21px;background:#c5d8f2"></div>
<div class="pt" style="left:206px;top:264px">底C10-200</div>
<div class="pt" style="left:206px;top:285px">面C10-200</div>
<div class="pt" style="left:206px;top:306px">底附加筋C8-200</div>
<div class="pt" style="left:206px;top:327px">底C8-200</div>
<div class="pt" style="left:206px;top:348px">面C8-200</div>
<div class="abs" style="left:162px;top:384px;width:461px;height:614px;background:#fff;border:1px solid #b9bdc4"></div>
<div class="abs" style="left:163px;top:384px;width:459px;height:11px;background:#d3d5da"></div>
<div class="pt" style="left:609px;top:382px;color:#666;font-size:11px">×</div>
<div class="abs" style="left:163px;top:395px;width:459px;height:23px;background:#f0f0f0;border-bottom:1px solid #cfd3d8"></div>
<div class="abs" style="left:227px;top:396px;width:66px;height:21px;background:#e3e3e3;border-left:1px solid #d0d0d0;border-right:1px solid #d0d0d0"></div>
<div class="pt" style="left:171px;top:399px;font-weight:bold">属性列表</div>
<div class="pt" style="left:236px;top:399px;color:#8e8e8e">图层管理</div>
<div class="abs" style="left:163px;top:419px;width:21px;height:578px;background:#f3f4f6;border-right:1px solid #d9dde3"></div>
<div class="row" style="top:418px;height:21px"><div class="cell num"></div><div class="cell pn" style="text-align:center;padding:0;color:#333">属性名称</div><div class="cell pv" style="text-align:center;padding:0;background:#7ab8f5;color:#fff">属性值</div><div class="cell pa" style="text-align:center">附加</div></div>
<div class="row" style="top:439px"><div class="cell num">1</div><div class="cell pn blue" style="padding-left:4px">名称</div><div class="cell pv">底C8-200</div><div class="cell pa"></div></div>
<div class="row" style="top:460px"><div class="cell num">2</div><div class="cell pn " style="padding-left:4px">类别</div><div class="cell pv">底筋</div><div class="cell pa"><div class="cb"></div></div></div>
<div class="row" style="top:481px"><div class="cell num">3</div><div class="cell pn blue" style="padding-left:4px">钢筋信息</div><div class="cell pv"><span style="font-size:9px;position:relative;top:-2px;margin-left:3px">Φ</span>8@200</div><div class="cell pa"><div class="cb"></div></div></div>
<div class="row" style="top:502px"><div class="cell num">4</div><div class="cell pn " style="padding-left:4px">左弯折(mm)</div><div class="cell pv">(0)</div><div class="cell pa"><div class="cb"></div></div></div>
<div class="row" style="top:523px"><div class="cell num">5</div><div class="cell pn " style="padding-left:4px">右弯折(mm)</div><div class="cell pv">(0)</div><div class="cell pa"><div class="cb"></div></div></div>
<div class="row" style="top:544px"><div class="cell num">6</div><div class="cell pn " style="padding-left:4px">备注</div><div class="cell pv"></div><div class="cell pa"><div class="cb"></div></div></div>
<div class="row" style="top:565px"><div class="cell num">7</div><div class="cell pn " style="padding-left:22px"><svg style="left:3px;top:3px" width="14" height="14" viewBox="0 0 15 15"><rect x="1" y="1" width="13" height="13" rx="2" fill="#fff" stroke="#666" stroke-width="1"/><path d="M5 7.500h5" stroke="#333" stroke-width="1"/></svg><svg style="left:6px;top:17px" width="2" height="4"><path d="M.500 0v4" stroke="#b4b8be"/></svg>钢筋业务属性</div><div class="cell pv" style="background:#ebebeb"></div><div class="cell pa"></div></div>
<div class="row" style="top:586px"><div class="cell num">8</div><div class="cell pn " style="padding-left:32px"><svg style="left:6px;top:0" width="24" height="21" viewBox="0 0 24 21"><path d="M.500 0v21M.500 10.500h16" stroke="#b4b8be" stroke-width="1" fill="none"/></svg>钢筋锚固</div><div class="cell pv">(35)</div><div class="cell pa"></div></div>
<div class="row" style="top:607px"><div class="cell num" style="background:#6fb1f3;color:#fff;font-weight:bold">9</div><div class="cell pn " style="padding-left:32px"><svg style="left:6px;top:0" width="24" height="21" viewBox="0 0 24 21"><path d="M.500 0v21M.500 10.500h16" stroke="#b4b8be" stroke-width="1" fill="none"/></svg>钢筋搭接</div><div class="cell pv" style="border:2px solid #666;line-height:18px;padding-left:2px;height:22px;top:-1px;width:250px;left:167px">(49)</div><div class="cell pa"></div></div>
<div class="row" style="top:628px"><div class="cell num">10</div><div class="cell pn " style="padding-left:32px"><svg style="left:6px;top:0" width="24" height="21" viewBox="0 0 24 21"><path d="M.500 0v21M.500 10.500h16" stroke="#b4b8be" stroke-width="1" fill="none"/></svg>归类名称</div><div class="cell pv">(底C8-200)</div><div class="cell pa"><div class="cb"></div></div></div>
<div class="row" style="top:649px"><div class="cell num">11</div><div class="cell pn " style="padding-left:32px"><svg style="left:6px;top:0" width="24" height="21" viewBox="0 0 24 21"><path d="M.500 0v21M.500 10.500h16" stroke="#b4b8be" stroke-width="1" fill="none"/></svg>汇总信息</div><div class="cell pv">(板受力筋)</div><div class="cell pa"><div class="cb"></div></div></div>
<div class="row" style="top:670px"><div class="cell num">12</div><div class="cell pn " style="padding-left:32px"><svg style="left:6px;top:0" width="24" height="21" viewBox="0 0 24 21"><path d="M.500 0v21M.500 10.500h16" stroke="#b4b8be" stroke-width="1" fill="none"/></svg>计算设置</div><div class="cell pv">按默认计算设置计算</div><div class="cell pa"></div></div>
<div class="row" style="top:691px"><div class="cell num">13</div><div class="cell pn " style="padding-left:32px"><svg style="left:6px;top:0" width="24" height="21" viewBox="0 0 24 21"><path d="M.500 0v21M.500 10.500h16" stroke="#b4b8be" stroke-width="1" fill="none"/></svg>节点设置</div><div class="cell pv">按默认节点设置计算</div><div class="cell pa"></div></div>
<div class="row" style="top:712px"><div class="cell num">14</div><div class="cell pn " style="padding-left:32px"><svg style="left:6px;top:0" width="24" height="21" viewBox="0 0 24 21"><path d="M.500 0v21M.500 10.500h16" stroke="#b4b8be" stroke-width="1" fill="none"/></svg>搭接设置</div><div class="cell pv">按默认搭接设置计算</div><div class="cell pa"></div></div>
<div class="row" style="top:733px"><div class="cell num">15</div><div class="cell pn " style="padding-left:32px"><svg style="left:6px;top:0" width="24" height="21" viewBox="0 0 24 21"><path d="M.500 0v10.5M.500 10.500h16" stroke="#b4b8be" stroke-width="1" fill="none"/></svg>长度调整(mm)</div><div class="cell pv"></div><div class="cell pa"><div class="cb"></div></div></div>
<div class="row" style="top:754px"><div class="cell num">16</div><div class="cell pn " style="padding-left:22px"><svg style="left:3px;top:3px" width="14" height="14" viewBox="0 0 15 15"><rect x="1" y="1" width="13" height="13" rx="2" fill="#fff" stroke="#666" stroke-width="1"/><path d="M5 7.500h5" stroke="#333" stroke-width="1"/><path d="M7.500 5v5" stroke="#333" stroke-width="1"/></svg>显示样式</div><div class="cell pv" style="background:#ebebeb"></div><div class="cell pa"></div></div>
<div class="abs" style="left:623px;top:157px;width:5px;height:840px;background:#fff"></div>
<div class="abs" style="left:623px;top:528px;width:5px;height:100px;background:#5d6673"></div>
<div class="abs" style="left:623px;top:574px;width:0;height:0;border-top:4px solid transparent;border-bottom:4px solid transparent;border-right:4px solid #aab2bd"></div>
<svg style="left:627px;top:156px" width="947" height="842" viewBox="627 156 947 842">
<defs><clipPath id="cv"><rect x="630" y="160" width="944" height="835"/></clipPath>
<clipPath id="slab"><polygon points="905,415 1228,415 1273,460 954.8,778.2 905,728.5"/></clipPath>
<pattern id="dots" x="655.700" y="897.700" width="27.400" height="54.800" patternUnits="userSpaceOnUse"><rect x="0" y="0" width="1.400" height="1.400" fill="#5c5c5c"/><rect x="13.700" y="27.400" width="1.400" height="1.400" fill="#5c5c5c"/></pattern>
</defs>
<rect x="627" y="156" width="947" height="842" fill="#000"/>
<g clip-path="url(#cv)">
<rect x="630" y="160" width="944" height="835" fill="#666666"/>
<rect x="630" y="160" width="944" height="835" fill="url(#dots)"/>
<polygon points="1321.9,459.7 1574,297 1574,996 1172.5,996 983.8,807.2 979.2,802.8 1297.5,484.5" fill="#000"/>
<path d="M875.5 380L455.5 800M953.3 380L533.3 800M1031.1 380L611.1 800M1108.9 380L688.9 800M1186.7 380L766.7 800M1264.5 380L844.5 800M1342.3 380L922.3 800M1420.1 380L1000.1 800M1249.5 380L1669.5 800M1171.7 380L1591.7 800M1093.9 380L1513.9 800M1016.1 380L1436.1 800M938.3 380L1358.3 800M860.5 380L1280.5 800M782.7 380L1202.7 800M704.9 380L1124.9 800M627.1 380L1047.1 800M549.3 380L969.3 800" stroke="#575757" stroke-width="1" fill="none" clip-path="url(#slab)"/>
<text transform="translate(739 786) rotate(-90) scale(0.667 1)" font-family='"Liberation Sans",sans-serif' font-weight="400" font-size="51" fill="#dedede" text-anchor="end" letter-spacing="7.6" stroke="#666666" stroke-width="2.25" stroke-linejoin="round">600</text>
<text transform="translate(965.7 264) rotate(0) scale(0.532 1)" font-family='"Liberation Sans",sans-serif' font-weight="400" font-size="51" fill="#dedede" text-anchor="middle" stroke="#666666" stroke-width="2.25" stroke-linejoin="round">C8@200</text>
<text transform="translate(819.2 322.4) rotate(0) scale(0.586 1)" font-family='"Liberation Sans",sans-serif' font-weight="400" font-size="51" fill="#dedede" text-anchor="middle" letter-spacing="1.1" stroke="#666666" stroke-width="2.25" stroke-linejoin="round">600</text>
<text transform="translate(957.6 322.4) rotate(0) scale(0.586 1)" font-family='"Liberation Sans",sans-serif' font-weight="400" font-size="51" fill="#dedede" text-anchor="middle" letter-spacing="1.1" stroke="#666666" stroke-width="2.25" stroke-linejoin="round">600</text>
<text transform="translate(739 270.5) rotate(-90) scale(0.667 1)" font-family='"Liberation Sans",sans-serif' font-weight="400" font-size="51" fill="#dedede" text-anchor="middle" letter-spacing="7.5" stroke="#666666" stroke-width="2.25" stroke-linejoin="round">1450</text>
<text transform="translate(739 581) rotate(-90) scale(0.667 1)" font-family='"Liberation Sans",sans-serif' font-weight="400" font-size="51" fill="#dedede" text-anchor="middle" letter-spacing="7.5" stroke="#666666" stroke-width="2.25" stroke-linejoin="round">2150</text>
<text transform="translate(1404 734.2) rotate(-45) scale(0.6 1)" font-family='"Liberation Sans",sans-serif' font-weight="400" font-size="46.5" fill="#dedede" text-anchor="middle" letter-spacing="12.2" stroke="#000000" stroke-width="1.9" stroke-linejoin="round">1400</text>
<text transform="translate(1232.8 906.2) rotate(-45) scale(0.6 1)" font-family='"Liberation Sans",sans-serif' font-weight="400" font-size="46.5" fill="#dedede" text-anchor="middle" letter-spacing="12.2" stroke="#000000" stroke-width="1.9" stroke-linejoin="round">1400</text>
<path d="M1576.2 586.2L1166.2 996.2" stroke="#009a00" stroke-width="1.2" fill="none"/>
<path d="M1166.8 656.8L1318.2 505.2M1198.8 688.8L1350.2 537.2M1230.8 720.8L1382.2 569.2M1262.8 752.8L1414.2 601.2M1294.8 784.8L1446.2 633.2M1326.8 816.8L1478.2 665.2M1358.8 848.8L1510.2 697.2M1389.5 879.5L1495.5 773.5M1421 911L1481 851.2M1010.5 834L1162.8 681.8M1042.2 865.8L1194.5 713.5M1074 897.5L1226.2 745.2M1106 929.5L1258.2 777.2M1138 961.5L1290.2 809.2M1169.2 992.8L1321.5 840.5M1198.2 1021.8L1341 879M1280.4 995L1328.2 948.2M1364.5 903.2L1374.3 893.3M1349.7 982.4L1406.8 925.8M1400.4 995L1438.5 957.5M1342.9 864.4L1321.4 988.2L1335 995M1366.3 887.8L1347.7 995M1510 698L1495.5 772.1L1491.5 799L1473.6 800.6L1497.6 849L1481 850.4L1461 946" stroke="#0000ff" stroke-width="1.200" fill="none"/>
<path d="M1204.6 578.3L1323 697" stroke="#009a00" stroke-width="1.2" fill="none"/>
<path d="M1319.3 696.8L1327.2 692.4L1339.8 713.9Z" fill="none" stroke="#00dd00" stroke-width="1.200"/>
<path d="M1038.5 749.2L1133.5 844.2" stroke="#00cc00" stroke-width="1.2" fill="none"/>
<path d="M1130 847L1137.3 840.9L1151.3 862.2Z" fill="none" stroke="#00dd00" stroke-width="1.200"/>
<rect x="630" y="160" width="240" height="12.500" fill="#2ddc2d"/>
<path d="M630 172.5L870 172.5" stroke="#00ffff" stroke-width="1.2" fill="none" stroke-dasharray="28 8 10 8"/>
<rect x="870" y="160" width="35" height="220" fill="#00ff00"/>
<path d="M870.5 172L870.5 380" stroke="#00ffff" stroke-width="1" fill="none" stroke-dasharray="30 10"/>
<path d="M904.5 160L904.5 380" stroke="#00ffff" stroke-width="1" fill="none" stroke-dasharray="30 10"/>
<rect x="1198" y="160" width="36" height="220" fill="#2ddc2d"/>
<path d="M1198.5 160L1198.5 380" stroke="#00ffff" stroke-width="1" fill="none" stroke-dasharray="40 12"/>
<path d="M1233.5 160L1233.5 380" stroke="#00ffff" stroke-width="1" fill="none" stroke-dasharray="40 12"/>
<path d="M1216 160L1216 398" stroke="#b9b9b9" stroke-width="1.5" fill="none"/>
<rect x="922" y="380" width="259" height="35" fill="#00ff00"/>
<path d="M922 415L1181 415" stroke="#00ffff" stroke-width="1.2" fill="none" stroke-dasharray="34 10 12 10"/>
<polygon points="1272.8,459.8 1297.5,484.5 979.2,802.8 954.5,778" fill="#2ddc2d"/>
<polygon points="1140,630 1515,1005 1500.5,1019.5 1125.5,644.5" fill="#2ddc2d"/>
<path d="M1146 636L1515 1005" stroke="#ffff00" stroke-width="1.3" fill="none"/>
<path d="M1131.5 650.5L1500.5 1019.5" stroke="#ffff00" stroke-width="1.3" fill="none"/>
<path d="M1273 460L954.8 778.2" stroke="#00ffff" stroke-width="1.2" fill="none" stroke-dasharray="34 22"/>
<path d="M1297.5 484.5L1146 636" stroke="#ffff00" stroke-width="1.3" fill="none"/>
<path d="M1131.5 650.5L979.2 802.8" stroke="#ffff00" stroke-width="1.3" fill="none"/>
<path d="M1285 472L1151.5 605.5" stroke="#8a8a8a" stroke-width="1.2" fill="none"/>
<path d="M1100.5 656.5L954.5 802.5" stroke="#8a8a8a" stroke-width="1.2" fill="none"/>
<path d="M1126.2 630.8L1197.8 702.2" stroke="#8a8a8a" stroke-width="1.2" fill="none"/>
<path d="M1197.8 702.2L1507.8 1012.2" stroke="#8a8a8a" stroke-width="1.2" fill="none" stroke-dasharray="270 38 8 38"/>
<path d="M1328.5 820L1328.5 849" stroke="#00ff00" stroke-width="1.5" fill="none"/>
<polygon points="983.8,807.2 1106,929.5 1075.8,959.8 953.5,837.5" fill="#00ff00"/>
<polygon points="1106,929.5 1288.2,1111.8 1258,1142 1075.8,959.8" fill="#8800ff"/>
<path d="M983.8 807.2L1106 929.5" stroke="#ffff00" stroke-width="1.3" fill="none"/>
<path d="M953.5 837.5L1075.8 959.8" stroke="#ffff00" stroke-width="1.3" fill="none"/>
<path d="M1106 929.5L1288.2 1111.8" stroke="#ff22ff" stroke-width="1" fill="none"/>
<path d="M1075.8 959.8L1258 1142" stroke="#ff22ff" stroke-width="1" fill="none"/>
<polygon points="1154,979.5 1139,995 1170,995" fill="#20a0a0"/>
<path d="M1157 987L1157 995" stroke="#00ff00" stroke-width="1.2" fill="none"/>
<polygon points="870,380 922,380 922,415 905,415 905,484.6 870,484.6" fill="#8800ff" stroke="#ff22ff" stroke-width="1"/>
<rect x="870" y="484.600" width="35" height="191.400" fill="#cccccc"/>
<path d="M870.5 484.6L870.5 676" stroke="#ff22ff" stroke-width="1" fill="none"/>
<path d="M904.5 484.6L904.5 676" stroke="#ff22ff" stroke-width="1" fill="none"/>
<polygon points="870,676 905,676 905,728.5 983.8,807.2 953.5,837.5 905,838 905,891 770,891 770,856.4 870,856.4" fill="#8800ff" stroke="#ff22ff" stroke-width="1"/>
<rect x="630" y="856.400" width="140" height="34.600" fill="#00ff00"/>
<path d="M630 856.9L770 856.9" stroke="#00ffff" stroke-width="1.2" fill="none" stroke-dasharray="26 8 18 12"/>
<path d="M630 890.8L770 890.8" stroke="#b8e000" stroke-width="1.2" fill="none"/>
<polygon points="1181,380 1242,380 1358,496 1333.5,520.5 1228,415 1181,415" fill="#8800ff"/>
<polygon points="1358,496 1548,686 1523.5,710.5 1333.5,520.5" fill="#cccccc"/>
<polygon points="1548,686 1681,819 1656.5,843.5 1523.5,710.5" fill="#8800ff"/>
<polygon points="1272.8,459.8 1333.5,398.9 1358.3,423.7 1322,460" fill="#8800ff"/>
<polygon points="1333.5,398.9 1521.2,211.2 1546,236 1358.3,423.7" fill="#cccccc"/>
<polygon points="1521.2,211.2 1576.2,156.2 1601,181 1546,236" fill="#8800ff"/>
<path d="M1181 380.500H1242L1681,819M1181 414.500H1228L1297.5,484.5M1297.5,484.5L1656.5,843.5" stroke="#ff22ff" stroke-width="1" fill="none"/>
<path d="M1297.2 435.2L1576.2 156.2" stroke="#ff22ff" stroke-width="1" fill="none"/>
<path d="M1322 460L1601 181" stroke="#ff22ff" stroke-width="1" fill="none"/>
<path d="M1181 380L1181 415" stroke="#ff22ff" stroke-width="1" fill="none"/>
<polygon points="1297.2,436 1321.2,460 1297.5,483.7 1273.5,459.8" fill="#8800ff"/>
<path d="M1216 380L1216 398" stroke="#b9b9b9" stroke-width="1.5" fill="none"/>
<path d="M1321.9 459.7L1574 297" stroke="#f070f0" stroke-width="1" fill="none"/>
<path d="M922 398H1235L1297.2,459.8" stroke="#c4c4c4" stroke-width="2" fill="none"/>
<path d="M889 398H922" stroke="#c4c4c4" stroke-width="2" fill="none"/>
<path d="M889 406.5L1235 406.5" stroke="#e00000" stroke-width="1" fill="none"/>
<path d="M1297.2 459.8L1588.5 168.5" stroke="#7d7d7d" stroke-width="2.2" fill="none"/>
<path d="M1297.2 459.8L1588.5 168.5" stroke="#d0d0d0" stroke-width="0.8" fill="none"/>
<path d="M1297.2 459.8L1668.8 831.2" stroke="#6a6a6a" stroke-width="1" fill="none"/>
<path d="M1410.2 573.6L1457 619.5" stroke="#8b0000" stroke-width="1.3" fill="none"/>
<path d="M1457 619.5L1461.7 624.8" stroke="#00ff00" stroke-width="1.3" fill="none"/>
<path d="M1499.7 647L1499.7 677" stroke="#00ff00" stroke-width="1.3" fill="none"/>
<path d="M1522.5 233.6L1543 213.2" stroke="#8b0000" stroke-width="1.3" fill="none"/>
<path d="M888 736L1275 1125" stroke="#8a8a8a" stroke-width="1.2" fill="none"/>
<path d="M1068 917L1114.2 962.1" stroke="#8b0000" stroke-width="1.3" fill="none"/>
<path d="M1114.2 962.1L1120 968" stroke="#00ff00" stroke-width="1.3" fill="none"/>
<path d="M886.500 160V872.500H630M888.500 160V874.500H630" stroke="#f5957c" stroke-width="1.100" fill="none"/>
<path d="M887.500 160V873.500H630" stroke="#8c8c8c" stroke-width="1" fill="none"/>
<path d="M887.4 426L887.4 487" stroke="#ffff00" stroke-width="1.6" fill="none"/>
<path d="M1488 674L1511.5 650.5" stroke="#00d000" stroke-width="1.2" fill="none"/>
<path d="M1317 846L1340 823" stroke="#00ff00" stroke-width="1.2" fill="none"/>
<path d="M630 381.5L887 381.5" stroke="#ffff00" stroke-width="3" fill="none"/>
<path d="M1011.5 160L1011.5 398" stroke="#ffff00" stroke-width="3" fill="none"/>
<path d="M1374.6 160L1374.6 382" stroke="#ffff00" stroke-width="3" fill="none"/>
<path d="M748.5 160L748.5 873" stroke="#ff22ff" stroke-width="3" fill="none"/>
<path d="M754.5 160L754.5 876" stroke="#00c800" stroke-width="1.2" fill="none"/>
<path d="M1101.5 160L1101.5 398" stroke="#ff22ff" stroke-width="3" fill="none"/>
<path d="M1296.5 160L1296.5 460" stroke="#ff22ff" stroke-width="3" fill="none"/>
<path d="M1297 460L1314 460" stroke="#ff44ff" stroke-width="3" fill="none"/>
<path d="M630 540.5L886 540.5" stroke="#ff22ff" stroke-width="3" fill="none"/>
<path d="M630 457H645.600V478" stroke="#ffff00" stroke-width="3" fill="none"/>
<path d="M647 458.500H662.700V492" stroke="#e00000" stroke-width="1" fill="none"/>
<path d="M693.5 397.5L814.7 397.5" stroke="#00c800" stroke-width="1.2" fill="none"/>
<path d="M743 386.5L765 408.5" stroke="#00c800" stroke-width="1.2" fill="none"/>
<path d="M693.5 769L814.7 769" stroke="#00c800" stroke-width="1.2" fill="none"/>
<path d="M743 758L765 780" stroke="#00c800" stroke-width="1.2" fill="none"/>
<path d="M766.800 307V272.200H1008.500V307" stroke="#ee0000" stroke-width="1" fill="none"/>
<path d="M810 380.500H870M843.700 381V484M810 484H870M819 356L868 405M819 459.500L868 508.500M1063.600 913V972.400M1094.100 883.200V951.900M1063.600 947.800L1094.100 918.700M1063.600 972.400L1076.300 960.100M1016.200 985.300H1085.500M1052 975L1072 995M1106 930H1208.400M1155 978.500H1208.400M1174.600 930V978.500M1149 905.800L1198.200 953.900M1149 953.900L1190 995" stroke="#c8c8c8" stroke-width="1" fill="none"/>
<path d="M1276 637L1285 631M1280.500 634L1284 640" stroke="#eee" stroke-width="1.200" fill="none"/>
<path d="M1104 798L1113 792M1108.500 795L1112 801" stroke="#eee" stroke-width="1.200" fill="none"/>
<path d="M744.8 734.7A44.5 44.5 0 0 1 812.3 676.9A40 40 0 0 1 870 676.2A48.8 48.8 0 0 1 960 710.3A40.6 40.6 0 0 1 959.5 776.8A34.9 34.9 0 0 1 954 838.4A31.5 31.5 0 0 1 959.4 892.7A45.8 45.8 0 0 1 900.6 962.9A66.5 66.5 0 0 1 796.9 962A33.9 33.9 0 1 1 743.5 920.2A27.4 27.4 0 0 1 745 876.6A34.8 34.8 0 0 1 743.5 824.1A56.5 56.5 0 0 1 744.8 734.7" stroke="#ff00ff" stroke-width="1.100" fill="none"/>
<text transform="translate(816 432.5) rotate(-90) scale(0.93 1)" font-family='"Liberation Sans",sans-serif' font-weight="400" font-size="18" fill="#f4f4f4" text-anchor="middle">600</text>
<text transform="translate(1060 914) rotate(-45) scale(1 1)" font-family='"Liberation Sans",sans-serif' font-weight="400" font-size="17" fill="#ffffff" text-anchor="middle">250</text>
<text transform="translate(1057 990) rotate(-45) scale(1 1)" font-family='"Liberation Sans",sans-serif' font-weight="400" font-size="17" fill="#f4f4f4" text-anchor="middle">400</text>
<text transform="translate(1147 954) rotate(-90) scale(1 1)" font-family='"Liberation Sans",sans-serif' font-weight="400" font-size="18" fill="#ffffff" text-anchor="middle">283</text>
<polygon points="899.1,176.8 892.6,183.3 883.4,183.3 876.9,176.8 876.9,167.6 883.4,161.1 892.6,161.1 899.1,167.6" fill="none" stroke="#007800" stroke-width="1.200"/><text x="888" y="177.6" font-family='"Liberation Sans",sans-serif' font-size="15" fill="#f4f4f4" text-anchor="middle">7</text>
<polygon points="1227.1,177.8 1220.6,184.3 1211.4,184.3 1204.9,177.8 1204.9,168.6 1211.4,162.1 1220.6,162.1 1227.1,168.6" fill="none" stroke="#007800" stroke-width="1.200"/><text x="1216" y="179.3" font-family='"Liberation Sans",sans-serif' font-size="17" fill="#f4f4f4" text-anchor="middle">8</text>
<polygon points="1574,411.1 1567.8,417.3 1559,417.3 1552.8,411.1 1552.8,402.3 1559,396.1 1567.8,396.1 1574,402.3" fill="none" stroke="#007800" stroke-width="1.200"/><text x="1563.4" y="413.5" font-family='"Liberation Sans",sans-serif' font-size="19" fill="#f4f4f4" text-anchor="middle">K</text>
<polygon points="653.2,773.4 647,779.6 638.2,779.6 632,773.4 632,764.6 638.2,758.4 647,758.4 653.2,764.6" fill="none" stroke="#007800" stroke-width="1.200"/><text x="642.6" y="775.1" font-family='"Liberation Sans",sans-serif' font-size="17" fill="#f4f4f4" text-anchor="middle">J</text>
<polygon points="1571.7,987.9 1565.2,994.4 1556,994.4 1549.5,987.9 1549.5,978.7 1556,972.2 1565.2,972.2 1571.7,978.7" fill="none" stroke="#007800" stroke-width="1.200"/><text x="1560.6" y="989.4" font-family='"Liberation Sans",sans-serif' font-size="17" fill="#f4f4f4" text-anchor="middle">10</text>
<path d="M680 945V926" stroke="#00e800" stroke-width="3.800"/><path d="M680 916L685.200 927H674.800Z" fill="#00e800"/>
<path d="M680 945H699" stroke="#ff0000" stroke-width="3.800"/><path d="M709.500 945L698.500 950.200V939.800Z" fill="#ff0000"/>
<circle cx="680" cy="945" r="5.300" fill="#0000c0"/>
<text transform="translate(680 915) scale(0.8 1)" font-family='"Liberation Sans",sans-serif' font-size="16" fill="#22e022" text-anchor="middle">Y</text>
<text transform="translate(716.300 951) scale(0.8 1)" font-family='"Liberation Sans",sans-serif' font-size="16" fill="#ff2a2a" text-anchor="middle">X</text>
</g>
<rect x="1543" y="160" width="31" height="226" fill="#8e949c"/><path d="M1543.500 160V386H1574" stroke="#a4a9b0" fill="none"/>
<circle cx="1558" cy="182" r="9" fill="#a9b4c1" stroke="#56616f"/><path d="M1552 178a7 6 0 0 1 8-3" stroke="#e8edf2" stroke-width="2" fill="none"/><ellipse cx="1558" cy="184" rx="12.500" ry="3.500" fill="none" stroke="#46515e" stroke-width="1.200" transform="rotate(-22 1558 184)"/><circle cx="1566.500" cy="178" r="4" fill="#c9d1da" stroke="#5d6875"/><path d="M1547.500 205.5l6-5.500h17.500v17.500l-6 5.500h-17.500z" fill="#8494a8" stroke="#3f4b5c" stroke-width="1"/><path d="M1547.500 205.5h17.500v17.500M1565 205.5l6-5.500" fill="none" stroke="#3f4b5c" stroke-width="1"/><path d="M1548.500 205l5.200-4.700h16l-5.200 4.700z" fill="#9aa8ba"/><text x="1560" y="221.5" font-size="8" font-family='"Liberation Sans",sans-serif' fill="#1e2733" text-anchor="middle">3D</text><path d="M1547.500 234.5l6-5.500h17.500v17.500l-6 5.500h-17.500z" fill="#d3e4f6" stroke="#3f4b5c" stroke-width="1"/><path d="M1547.500 234.5h17.500v17.500M1565 234.5l6-5.500" fill="none" stroke="#3f4b5c" stroke-width="1"/><path d="M1548.500 234l5.200-4.700h16l-5.200 4.700z" fill="#e4f0fb"/><path d="M1553.500 229v17.500h17.500M1553.500 246.5l-6 5.500" fill="none" stroke="#3f4b5c" stroke-width="1"/><path d="M1547.500 273.5l6-5.500h17.500v17.500l-6 5.500h-17.500z" fill="#8494a8" stroke="#3f4b5c" stroke-width="1"/><path d="M1547.500 273.5h17.500v17.500M1565 273.5l6-5.500" fill="none" stroke="#3f4b5c" stroke-width="1"/><path d="M1548.500 273l5.200-4.700h16l-5.200 4.700z" fill="#9aa8ba"/><path d="M1555 259h7l-3.500 3.500z" fill="#39424c"/><path d="M1555 298h7l-3.500 3.500z" fill="#39424c"/><path d="M1555 336.5h7l-3.500 3.500z" fill="#39424c"/><path d="M1565.500 312.500a9.500 9.500 0 1 0 2.500 9" fill="none" stroke="#414b57" stroke-width="1.800"/><path d="M1561 313.500l8.500 1.500-.5-8z" fill="#414b57"/><path d="M1547 346.500h23" stroke="#b4bac2"/><rect x="1547.500" y="352.500" width="23" height="21" fill="#8fa0b4" stroke="#3f4b5c"/><path d="M1547.500 356.500h23M1559 356.500v17" stroke="#3f4b5c"/><path d="M1550 360.500h2M1553.500 360.500h3M1550 364.500h2M1553.500 364.500h3M1550 368.500h2M1553.500 368.500h3M1561.500 360.500h2M1565 360.500h3M1561.500 364.500h2M1565 364.500h3M1561.500 368.500h2M1565 368.500h3" stroke="#2c3744"/><path d="M1550 354.500l1 1 1.500-2M1562 354.500l1 1 1.500-2" stroke="#2c3744" stroke-width=".8" fill="none"/>
</svg>
<div class="abs" style="left:0;top:997px;width:1574px;height:28px;background:#dedfe1"></div>
<div class="abs" style="left:627px;top:997px;width:947px;height:1px;background:#000"></div>
<div class="t st" style="left:2px;top:1006px">18 Y = 392265</div>
<div class="t st" style="left:212px;top:1006px">层高:&nbsp;&nbsp;&nbsp;4.75</div>
<div class="t st" style="left:295px;top:1006px">标高:&nbsp;&nbsp;&nbsp;-5.35~-0.6</div>
<div class="t st" style="left:428px;top:1006px">0</div>
<div class="t st" style="left:531px;top:1006px">隐藏:&nbsp;&nbsp;0</div>
<div class="sb" style="left:634px;width:26px"></div>
<div class="sb" style="left:662px;width:36px;background:#fff;border:1.500px solid #2b8cf0"></div>
<div class="sb" style="left:704px;width:25px"></div>
<div class="sb" style="left:732px;width:36px"></div>
<div class="sb" style="left:771px;width:36px"></div>
<div class="sb" style="left:810px;width:73px;padding-left:6px">跨图层选择</div>
<div class="sb" style="left:887px;width:60px;padding-left:6px">折线选择</div>
<div class="t" style="left:953px;top:1006px">按鼠标左键布置钢筋,按右键中止或 ESC 取消</div>
<svg style="left:634px;top:1001px" width="180" height="24" viewBox="634 1001 180 24">
<path d="M639.500 1007v11.500h13" fill="none" stroke="#333" stroke-width="1.200"/><rect x="639.500" y="1014.500" width="4" height="4" fill="#eee" stroke="#333" stroke-width="1"/>
<rect x="667.500" y="1006.500" width="13" height="13" fill="#fff" stroke="#3b7fd4" stroke-width="1.200"/><rect x="666" y="1005" width="4.500" height="4.500" fill="#f7c9a0" stroke="#f08020" stroke-width="1"/>
<path d="M688 1012h6l-3 3.500z" fill="#444"/>
<path d="M709 1006l15 15M724 1006l-15 15" stroke="#8a8a8a" stroke-width="1"/>
<path d="M737 1019h15M737 1019l12-12" stroke="#333" stroke-width="1.200" fill="none"/><circle cx="744.500" cy="1012.500" r="1.600" fill="#333"/>
<path d="M758 1012h6l-3 3.500z" fill="#555"/>
<path d="M776 1010h7M779.500 1006.500v7" stroke="#333" stroke-width="1.200"/><rect x="781" y="1015" width="10" height="4" fill="#333"/>
<path d="M797 1012h6l-3 3.500z" fill="#555"/>
</svg>
<div class="abs" style="left:471px;top:111px;width:830px;height:56px;border:3px solid #f5221b;border-radius:4px"></div>
<div class="abs" style="left:826px;top:346px;width:470px;height:457px;border:3px solid #f5221b;border-radius:3px"></div>
</body>
</html>
